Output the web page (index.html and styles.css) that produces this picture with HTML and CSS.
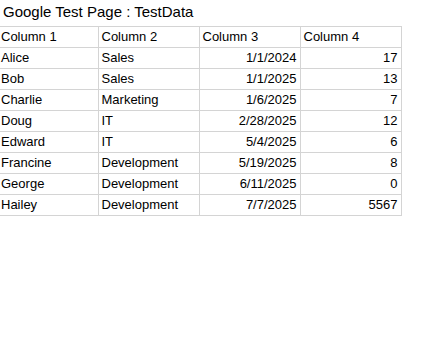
FILE: index.html
```html
<!DOCTYPE html>
<html>
<head>
<meta charset="utf-8">
<link rel="stylesheet" href="styles.css">
</head>
<body>
<div class="title">Google Test Page : TestData</div>
<table class="grid">
  <colgroup>
    <col class="c1"><col class="cn"><col class="cn"><col class="cn">
  </colgroup>
  <tr class="head"><td>Column 1</td><td>Column 2</td><td>Column 3</td><td>Column 4</td></tr>
  <tr><td>Alice</td><td>Sales</td><td class="num">1/1/2024</td><td class="num">17</td></tr>
  <tr><td>Bob</td><td>Sales</td><td class="num">1/1/2025</td><td class="num">13</td></tr>
  <tr><td>Charlie</td><td>Marketing</td><td class="num">1/6/2025</td><td class="num">7</td></tr>
  <tr><td>Doug</td><td>IT</td><td class="num">2/28/2025</td><td class="num">12</td></tr>
  <tr><td>Edward</td><td>IT</td><td class="num">5/4/2025</td><td class="num">6</td></tr>
  <tr><td>Francine</td><td>Development</td><td class="num">5/19/2025</td><td class="num">8</td></tr>
  <tr><td>George</td><td>Development</td><td class="num">6/11/2025</td><td class="num">0</td></tr>
  <tr><td>Hailey</td><td>Development</td><td class="num">7/7/2025</td><td class="num">5567</td></tr>
</table>
</body>
</html>
```
FILE: styles.css
```css
html, body {
  margin: 0;
  padding: 0;
  background: #ffffff;
}
body {
  font-family: "Liberation Sans", Arial, sans-serif;
  color: #000000;
}
.title {
  font-size: 15px;
  line-height: 20px;
  padding: 2px 0 0 3px;
  height: 24px;
  box-sizing: border-box;
}
.grid {
  border-collapse: collapse;
  table-layout: fixed;
  width: 401px;
  margin-top: 2px;
  font-size: 13px;
}
.c1 { width: 98px; }
.cn { width: 101px; }
.grid td {
  border: 1px solid #d4d4d4;
  height: 20px;
  padding: 0 3px;
  line-height: 20px;
  white-space: nowrap;
  overflow: hidden;
  box-sizing: border-box;
  vertical-align: bottom;
}
.grid td:first-child {
  border-left: 0;
  padding-left: 1px;
}
.grid .head td {
  height: 21px;
}
.grid td.num {
  text-align: right;
}
```
